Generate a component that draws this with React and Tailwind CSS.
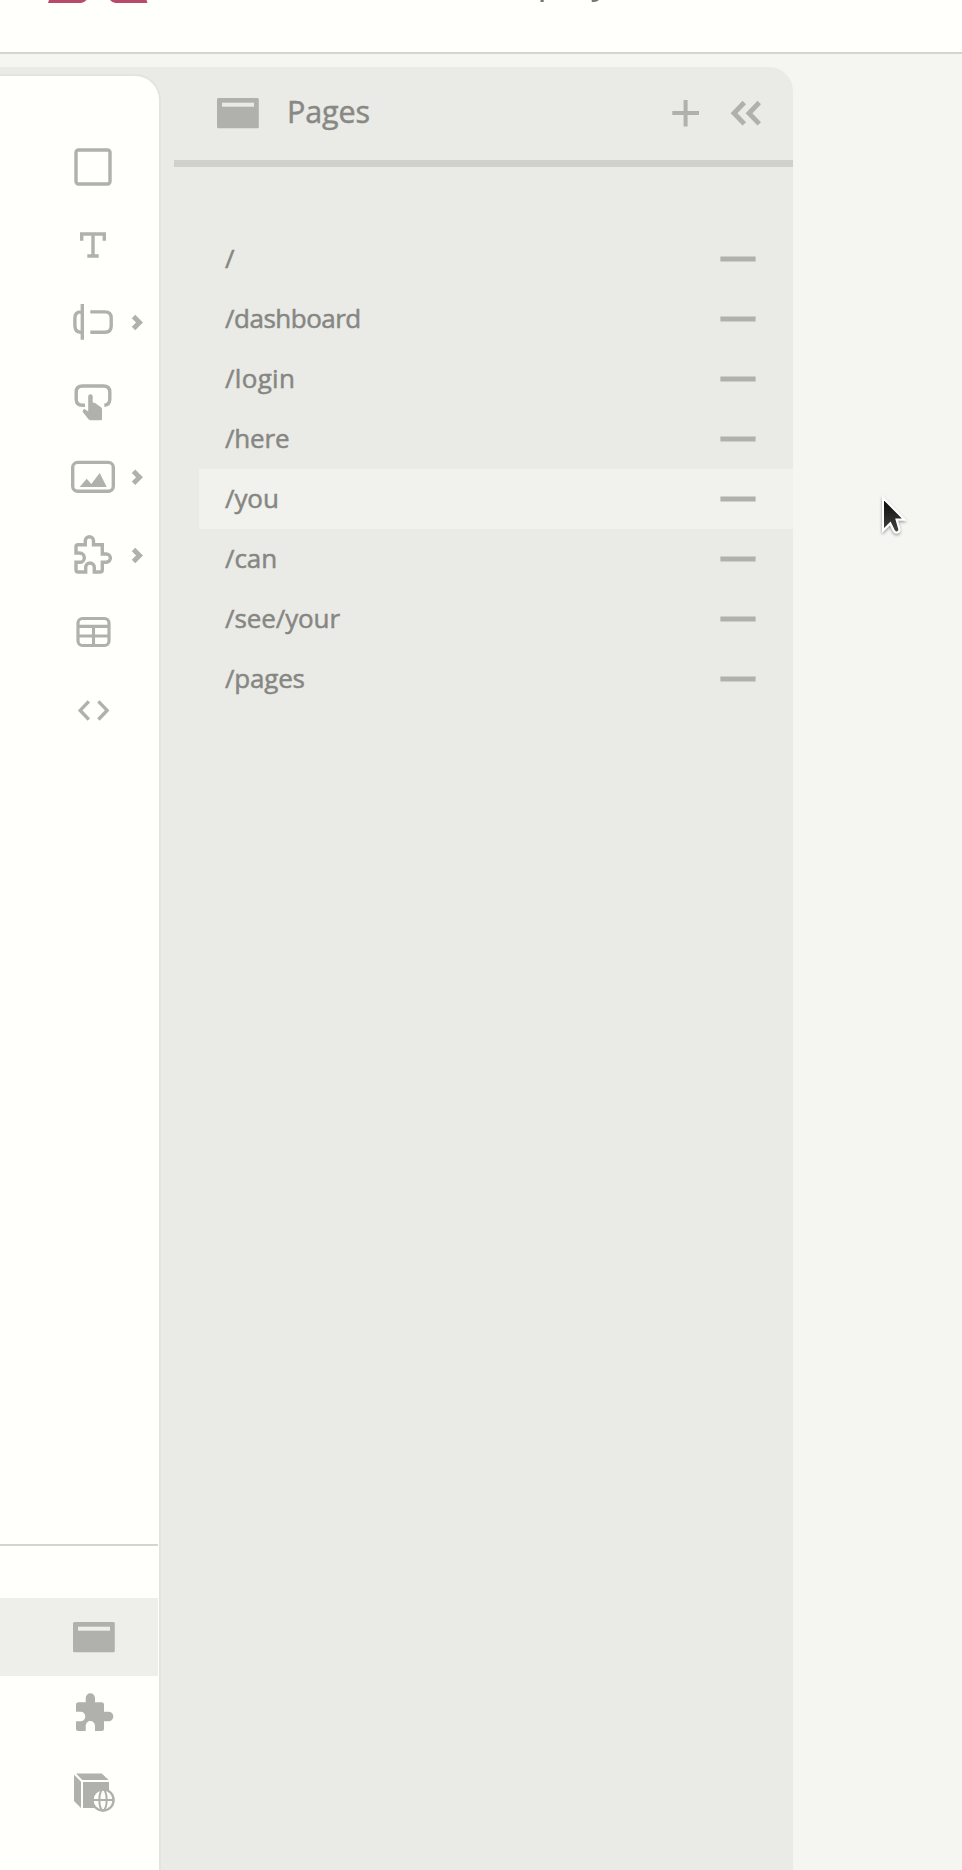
import React from "react";

const INK = "#b0b0ac";

const PAGES = [
  { path: "/", tracking: "tracking-normal" },
  { path: "/dashboard", tracking: "tracking-[-0.5px]" },
  { path: "/login", tracking: "tracking-[0.3px]" },
  { path: "/here", tracking: "tracking-[-0.2px]" },
  { path: "/you", tracking: "tracking-[-0.1px]", hovered: true },
  { path: "/can", tracking: "tracking-[-0.1px]" },
  { path: "/see/your", tracking: "tracking-[-0.1px]" },
  { path: "/pages", tracking: "tracking-[-0.2px]" },
];

// Each sidebar row is 78px tall; glyphs are drawn in the coordinates of the rail.
function RailItem({ top, active, chevron, children }) {
  return (
    <button className={`block h-[78px] w-[158px] shrink-0 ${active ? "bg-[#eeeeeb]" : ""}`}>
      <svg className="block h-[78px] w-[158px]" viewBox={`0 ${top} 158 78`} fill="none" stroke={INK} strokeWidth="3.4">
        {children}
        {chevron && <path d={`M133.5 ${chevron - 6} l6 6 l-6 6`} strokeWidth="4.9" />}
      </svg>
    </button>
  );
}

function WindowIcon({ slot }) {
  return (
    <svg className="block h-[31px] w-[42px] shrink-0" viewBox="0 0 42 31">
      <rect width="41.8" height="30.3" rx="1.5" fill={INK} />
      <rect x="5" y="4.7" width="32" height="4" fill={slot} />
    </svg>
  );
}

export default function App() {
  return (
    <div className="flex h-[1870px] w-[962px] flex-col overflow-hidden bg-[#f5f5f2] font-['Open_Sans',sans-serif]">
      <header className="h-[54px] shrink-0 border-b-2 border-[#d5d5d0] bg-[#fffffc]">
        <svg className="block h-[4px] w-[962px]" viewBox="0 0 962 4">
          <path d="M48 3 L49 0 H86.5 Q84.5 2.4 81 3 Z M147.5 3 L146.5 0 H110 Q112 2.4 115.5 3 Z" fill="#b94a6c" />
          <path d="M540.5 0 H543.7 V2 H540.5 Z M591.7 0 H598.7 Q597.5 2 591.7 2 Z" fill="#777773" />
        </svg>
      </header>

      <div className="mt-[13px] flex min-h-0 w-[793px] flex-1 rounded-tr-[24px] bg-[#eaebe7]">
        <aside className="mt-[7px] flex w-[161px] shrink-0 flex-col rounded-tr-[26px] border-t-2 border-r-2 border-[#e3e4e0] bg-[#fffffc] pt-[52px]">
          <RailItem top={128}>
            <rect x="76" y="150" width="34" height="34" rx="2.5" />
          </RailItem>
          <RailItem top={206}>
            <path d="M81.7 240.7 V234 H104.3 V240.7 M93 234 V256 M87.3 256 H98.7" strokeWidth="3.4" />
          </RailItem>
          <RailItem top={284} chevron={322.5}>
            <path d="M82.3 304 V339.7 M80.7 311.9 Q74.9 311.9 74.9 318.5 V325.5 Q74.9 332.2 80.7 332.2 M90.3 311.9 H105 Q111.2 311.9 111.2 318 V326 Q111.2 332.2 105 332.2 H90.3" />
          </RailItem>
          <RailItem top={362}>
            <path d="M85 405.3 H82.5 Q76.2 405.3 76.2 399 V392 Q76.2 386 82.5 386 H103.5 Q109.8 386 109.8 392 V399 Q109.8 405 104.3 405.3" />
            <path
              stroke="none"
              fill={INK}
              d="M88.2 396.5 a2.25 2.25 0 0 1 4.5 0 V402.5 L95 403 L101 407.2 Q102 408 102 409.5 V419 q0 1.3 -1.3 1.3 H91 q-1.7 0 -2.7-1.2 L82.6 411.7 q0-2.4 2-2.6 L88.2 411.5z"
            />
          </RailItem>
          <RailItem top={440} chevron={477.3}>
            <rect x="72.7" y="462.4" width="40.6" height="28.9" rx="5" />
            <path d="M79.7 487 L86.7 478.7 L91.3 484 L99.7 473 L106.7 487 Z" stroke="none" fill={INK} />
          </RailItem>
          <RailItem top={518} chevron={555.5}>
            <path d="M76 553 V546.7 q0-2 2-2 H85.3 V540.8 a4.1 4.1 0 0 1 8.2 0 V544.7 H102.3 V554 H106.3 a4.1 4.1 0 0 1 0 8.2 H102.3 V570 q0 2 -2 2 H94.3 V567.3 a4.3 4.3 0 0 0 -8.6 0 V572 H78 q-2 0-2-2 V562.3 H79.7 a4.65 4.65 0 0 0 0-9.3z" />
          </RailItem>
          <RailItem top={596}>
            <rect x="78" y="618.5" width="31" height="27" rx="4.5" strokeWidth="3.2" />
            <path d="M78 626.4 H109 M78 636 H109 M93.5 626 V645" strokeWidth="3.1" />
          </RailItem>
          <RailItem top={674}>
            <path d="M88.8 701.3 L80.2 710.4 L88.8 719.5 M98.4 701.3 L107.1 710.4 L98.4 719.5" />
          </RailItem>

          <div className="mt-auto h-[54px] w-[158px] shrink-0 border-t-2 border-[#d5d5d0]" />
          <RailItem top={1598} active>
            <rect x="73" y="1622" width="41.8" height="30.3" rx="1.5" fill={INK} stroke="none" />
            <rect x="78" y="1626.7" width="32" height="4" fill="#eeeeeb" stroke="none" />
          </RailItem>
          <RailItem top={1676}>
            <path
              stroke="none"
              fill={INK}
              d="M76 1711.7 V1704.8 q0-2.5 2.5-2.5 H85.7 V1698 a4.65 4.65 0 0 1 9.3 0 V1702.3 H101.5 q2.5 0 2.5 2.5 V1711.7 H108.5 a4.8 4.8 0 0 1 0 9.6 H104 V1728.5 q0 2.5 -2.5 2.5 H95 V1725.7 a4.65 4.65 0 0 0 -9.3 0 V1731 H78.5 q-2.5 0-2.5-2.5 V1721.3 H80.5 a4.8 4.8 0 0 0 0-9.6z"
            />
          </RailItem>
          <RailItem top={1754}>
            <path stroke="none" fill={INK} d="M76 1773.5 H101.7 L108.7 1780 H82.3 Z M74 1774.7 L81 1781.7 V1807.9 L74 1800.9 Z M83 1782 H109 V1807.9 H83 Z" />
            <circle cx="103" cy="1800" r="10.6" fill="#fffffc" strokeWidth="2.4" />
            <ellipse cx="103" cy="1800" rx="3.7" ry="10.4" strokeWidth="2" />
            <path d="M92.5 1800 H113.5" strokeWidth="2.1" />
          </RailItem>
          <div className="h-[38px] shrink-0" />
        </aside>

        <section className="min-w-0 flex-1">
          <div className="ml-[13px] flex h-[100px] items-center border-b-[7px] border-[#d0d1cc] pl-[43px]">
            <WindowIcon slot="#eaebe7" />
            <h1 className="mb-[5px] ml-[28px] text-[30.5px] leading-none font-medium tracking-[-0.1px] text-[#888884] [-webkit-text-stroke:0.5px_#888884]">
              Pages
            </h1>
            <svg className="mr-[32px] ml-auto block h-[29px] w-[90px]" viewBox="671 99 90 29" fill="none" stroke={INK} strokeWidth="4">
              <path d="M672.3 113 H699 M685.6 100 V126.5" />
              <path d="M744.3 102.5 L734 113.2 L744.3 123.9 M759.3 102.5 L749 113.2 L759.3 123.9" strokeWidth="4.9" />
            </svg>
          </div>
          <ul className="mt-[62px] ml-[38px]">
            {PAGES.map(({ path, tracking, hovered }) => (
              <li
                key={path}
                className={`flex h-[60px] items-center justify-between pr-[37px] pl-[26px] ${hovered ? "bg-[#f1f1ee]" : ""}`}
              >
                <span className={`mb-[2px] text-[26px] leading-none text-[#868682] [-webkit-text-stroke:0.5px_#868682] ${tracking}`}>
                  {path}
                </span>
                <svg className="block h-[6px] w-[36px]" viewBox="0 0 36 6">
                  <rect x="0.4" y="0.5" width="35.2" height="5" fill={INK} />
                </svg>
              </li>
            ))}
          </ul>
        </section>
      </div>

      <svg className="absolute top-[488px] left-[872px] h-[52px] w-[44px]" viewBox="872 488 44 52">
        <defs>
          <linearGradient id="pointer" x1="0" y1="0" x2="0" y2="1">
            <stop offset="0.2" stopColor="#151612" />
            <stop offset="1" stopColor="#44453f" />
          </linearGradient>
          <filter id="lift" x="-30%" y="-30%" width="160%" height="160%">
            <feDropShadow dx="0" dy="1.5" stdDeviation="1.5" floodOpacity="0.4" />
          </filter>
        </defs>
        <path
          d="M883 498 L904.3 519.5 H896.5 L899.3 529.3 Q899.7 532 897 532.5 Q894.8 532.7 893.8 530.5 L890.3 523.3 L883 530.5 Z"
          fill="url(#pointer)"
          stroke="#fff"
          strokeWidth="2"
          filter="url(#lift)"
        />
      </svg>
    </div>
  );
}
